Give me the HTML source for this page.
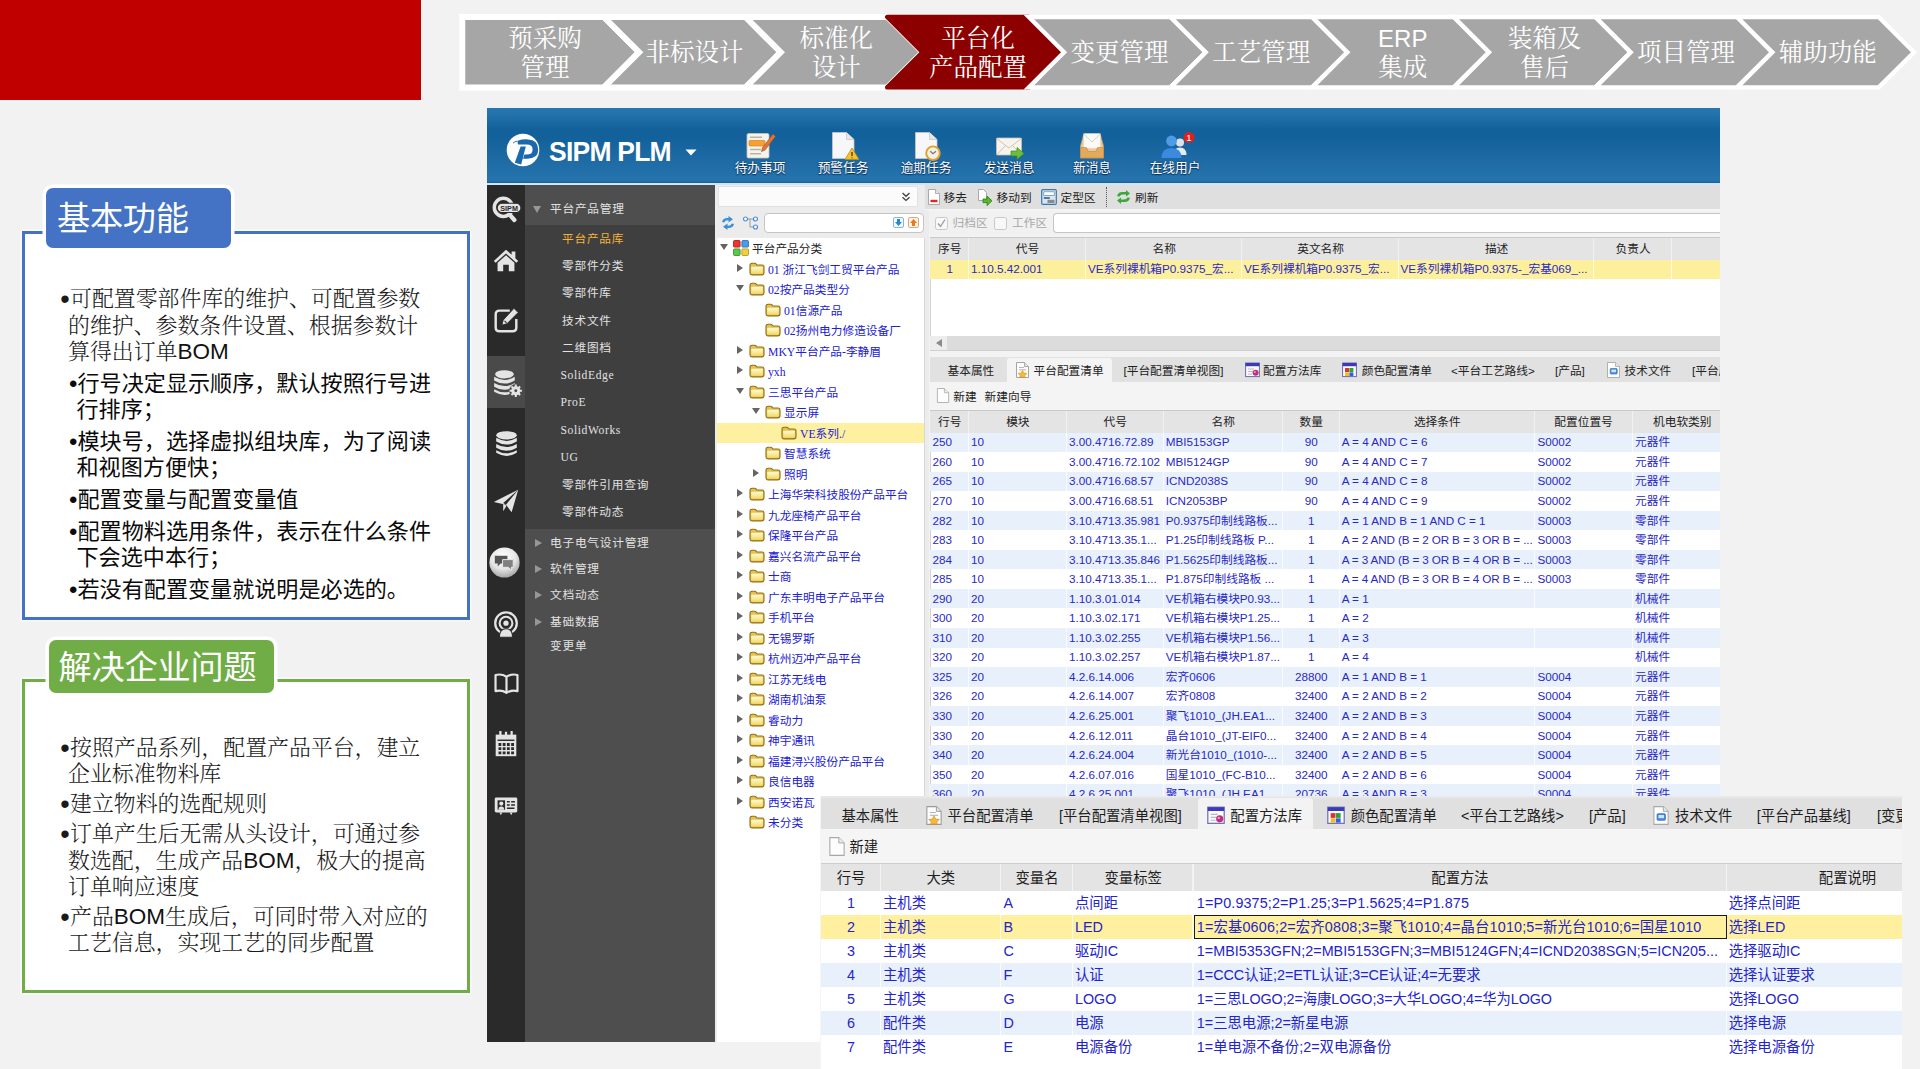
<!DOCTYPE html>
<html lang="zh-CN"><head><meta charset="utf-8"><title>平台化产品配置</title>
<style>

*{margin:0;padding:0;box-sizing:border-box}
html,body{width:1920px;height:1069px;overflow:hidden;background:#f2f2f2}
body{position:relative;font-family:"Liberation Sans","Noto Sans CJK SC",sans-serif}
.abs{position:absolute}
.red{position:absolute;left:0;top:0;width:421px;height:100px;background:#c00000}
.chev{position:absolute;left:0;top:0}
.cvt{position:absolute;width:200px;text-align:center;color:#fff;font-family:"Liberation Serif","Noto Serif CJK SC",serif;font-size:24.5px;line-height:28.5px;white-space:nowrap;font-weight:400}
.cvt .erp{font-family:"Liberation Sans",sans-serif;font-size:24px}
.box{position:absolute;background:#fff;border:3.7px solid #000;box-shadow:0 0 2px 1px rgba(255,255,255,.9)}
.tab{position:absolute;border-radius:7px;box-shadow:0 0 0 3.5px #fff}
.tab span{position:absolute;top:0;height:100%;display:flex;align-items:center;color:#fff;font-size:33.2px;white-space:nowrap;font-family:"Liberation Sans","Noto Sans CJK SC",sans-serif;letter-spacing:-0.2px;padding-bottom:5px}
.ps,.ph{position:absolute;white-space:nowrap;color:#111;font-size:21.9px;line-height:26.2px}
.ps{font-family:"Liberation Serif","Noto Serif CJK SC",serif;font-weight:300;color:#1a1a1a}
.ps b{font-family:"Liberation Sans",sans-serif;font-weight:400;font-size:22.5px;color:#111}
.ph{font-family:"Liberation Sans","Noto Sans CJK SC",sans-serif;line-height:26.4px;font-size:22.1px;font-weight:400;color:#0a0a0a}
.ps u,.ph u{display:inline-block;width:2px;text-decoration:none}
.ph u{width:1px}
.bu{position:absolute;font-family:"Liberation Sans",sans-serif;font-size:27px;left:-7.8px;top:0;line-height:26.6px}
.ph .bu{font-size:24px;left:-7.4px;line-height:26.4px}


.hdr{position:absolute;left:487px;top:108px;width:1233px;height:75px;background:linear-gradient(#2776b0 0%,#2473ac 8%,#13619b 28%,#13619b 40%,#1c69a3 65%,#2674ad 97%,#205d90 100%)}
.hdrline{position:absolute;left:487px;top:183px;width:1233px;height:1.5px;background:#cfe6f7}
.logo{position:absolute;left:549px;top:135.6px;color:#fff;font:700 28px/32px "Liberation Sans",sans-serif;letter-spacing:-0.8px;white-space:nowrap;transform-origin:0 50%;transform:scaleX(.945)}
.hlab{position:absolute;top:159.8px;width:80px;text-align:center;color:#fff;font-size:12.7px;line-height:16px;white-space:nowrap;text-shadow:0 1px 1px rgba(0,30,70,.8),0 0 2px rgba(0,30,70,.6)}
.ibar{position:absolute;left:487px;top:184.5px;width:38px;height:857.5px;background:#2a2a2a}
.isel{position:absolute;left:487px;top:356px;width:38px;height:52px;background:#4a4a4a}
.nav{position:absolute;left:525px;top:184.5px;width:189.5px;height:857.5px;background:#4e4e4e}
.navsub{position:absolute;left:525px;top:225px;width:189.5px;height:303.5px;background:#3f3f3f}
.ng,.ns{position:absolute;color:#e2e2e2;font-size:11.7px;line-height:18px;letter-spacing:.75px;white-space:nowrap}
.ng{left:550px}
.ns{left:562px}
.ns.on{color:#f3b43a}
.ns.en{font-family:"Liberation Serif",serif;font-size:11.6px;left:560.5px;letter-spacing:.6px}
.ng i{position:absolute;width:0;height:0}
.ng i.dn{left:-17px;top:6px;border-left:4.5px solid transparent;border-right:4.5px solid transparent;border-top:7px solid #979797}
.ng i.rt{left:-15px;top:4.5px;border-top:4.5px solid transparent;border-bottom:4.5px solid transparent;border-left:7px solid #979797}
.tpanel{position:absolute;left:714.5px;top:184.5px;width:214px;height:857.5px;background:#ececec}
.combo{position:absolute;left:718px;top:186px;width:200px;height:21px;background:#fbfbfb;border:1px solid #e2e2e2;border-radius:2px}
.tsearch{position:absolute;left:764px;top:212.5px;width:160px;height:20.5px;background:#fff;border:1px solid #c4c4c4;border-radius:4px}
.twhite{position:absolute;left:717px;top:237.5px;width:207.5px;height:804.5px;background:#fff;border-right:1px solid #d8d8d8}
.tsel{position:absolute;left:717px;width:207px;height:20px;background:#fdf0a0}
.tt{position:absolute;color:#2020d2;font-family:"Liberation Serif","Noto Sans CJK SC",sans-serif;font-size:11.7px;line-height:18px;white-space:nowrap;letter-spacing:0}
.tt.blk{color:#222;font-family:"Liberation Sans","Noto Sans CJK SC",sans-serif}
.ta{position:absolute;width:0;height:0}
.ta.d{border-left:4px solid transparent;border-right:4px solid transparent;border-top:6.5px solid #646464}
.ta.r{border-top:4px solid transparent;border-bottom:4px solid transparent;border-left:6.5px solid #646464}


.rbg{position:absolute;left:928.5px;top:184.5px;width:791.5px;height:857.5px;background:#f3f3f3}
.tb1{position:absolute;left:925px;top:184.5px;width:795px;height:25px;background:#dfdfdf;border-bottom:1px solid #f6f6f6}
.tx{position:absolute;color:#222;font-size:11.7px;line-height:18px;white-space:nowrap}
.tx.gy{color:#a8a8a8}
.frow{position:absolute;left:928.5px;top:211px;width:791.5px;height:24px;background:#f1f1f1}
.cb{position:absolute;width:13px;height:13px;border:1px solid #c8c8c8;border-radius:2.5px;background:#f8f8f8}
.finput{position:absolute;left:1053px;top:213px;width:667px;height:20px;background:#fff;border:1px solid #c6c6c6;border-right:0;border-radius:4px 0 0 4px}
.g1white{position:absolute;left:930.3px;top:237.8px;width:789.7px;height:98px;background:#fff;border-left:1px solid #d4d4d4}
.ghead{position:absolute;background:#e4e4e4}
.gline{position:absolute;background:#c9c9c9}
.gh{position:absolute;height:22px;line-height:22px;text-align:center;color:#222;font-size:11.7px;white-space:nowrap}
.gsep{position:absolute;width:1px;background:#f1f1f1}
.gsep.w{background:rgba(255,255,255,.75)}
.gsel{position:absolute;background:#fdf09c}
.gc{position:absolute;color:#2828c6;font-size:11.7px;line-height:18px;white-space:nowrap}
.gc.ctr{text-align:center}
.hsb{position:absolute;left:930.3px;top:335.8px;width:789.7px;height:14.5px;background:#dcdcdc}
.hsbb{position:absolute;left:930.3px;top:335.8px;width:17px;height:14.5px;background:#ededed}
.hsbl{position:absolute;left:930.3px;top:350.3px;width:789.7px;height:1px;background:#cfcfcf}
.ta.l{border-top:4px solid transparent;border-bottom:4px solid transparent;border-right:6px solid #8a8a8a}
.tabs1{position:absolute;left:930.3px;top:357.3px;width:789.7px;height:24.5px;background:#e1e1e1}
.tabon{position:absolute;background:#f4f4f4;border-radius:3px 3px 0 0}
.tb2{position:absolute;left:930.3px;top:381.8px;width:789.7px;height:28px;background:#f4f4f4}
.g2white{position:absolute;left:930.3px;top:432.5px;width:789.7px;height:372px;background:#fff;border-left:1px solid #d4d4d4}
.gzeb{position:absolute;background:#e8f0fb}
.ov{position:absolute;left:821.3px;top:796px;width:1080.7px;height:273px;background:#fff;overflow:hidden;box-shadow:-1px 0 0 #f5f5f5}
.otabs{position:absolute;left:0;top:0;width:100%;height:33px;background:linear-gradient(#ececec 0,#e0e0e0 3px)}
.otabon{position:absolute;background:#f3f3f3;border-radius:4px 4px 0 0}
.ox{position:absolute;color:#1e1e1e;font-size:14.35px;line-height:20px;white-space:nowrap}
.otb{position:absolute;left:0;top:33px;width:100%;height:34.2px;background:#f5f5f5}
.ogl{position:absolute;left:0;width:100%;height:1px;background:#cdcdcd}
.oghead{position:absolute;left:0;width:100%;height:26.8px;background:#e4e4e4}
.ogh{position:absolute;height:26.8px;line-height:29.6px;text-align:center;color:#1e1e1e;font-size:14.35px;white-space:nowrap}
.ogsep{position:absolute;width:1.2px;background:#f3f3f3}
.ogsep.w{background:rgba(255,255,255,.75)}
.ogsel{position:absolute;left:0;width:100%;background:#fef09e}
.ogzeb{position:absolute;left:0;width:100%;background:#e8f0fb}
.ofocus{position:absolute;border:1.6px solid #1a1a1a}
.oc{position:absolute;color:#2424cc;font-size:14.35px;line-height:20px;white-space:nowrap}
.oc.ctr{text-align:center}

</style></head><body>
<div class="red"></div>
<svg class="chev" width="1920" height="104" viewBox="0 0 1920 104">
<polygon points="462.25,17.00 603.90,17.00 639.10,52.20 603.90,87.40 462.25,87.40" fill="#a6a6a6" stroke="#ffffff" stroke-width="6" stroke-linejoin="miter"/>
<polygon points="603.90,17.00 745.55,17.00 780.75,52.20 745.55,87.40 603.90,87.40 639.10,52.20" fill="#a6a6a6" stroke="#ffffff" stroke-width="6" stroke-linejoin="miter"/>
<polygon points="745.55,17.00 887.20,17.00 922.40,52.20 887.20,87.40 745.55,87.40 780.75,52.20" fill="#a6a6a6" stroke="#ffffff" stroke-width="6" stroke-linejoin="miter"/>
<polygon points="887.20,17.00 1028.85,17.00 1064.05,52.20 1028.85,87.40 887.20,87.40 922.40,52.20" fill="#8c0000" stroke="#8c0000" stroke-width="4.4" stroke-linejoin="round"/>
<polygon points="1028.85,17.00 1170.50,17.00 1205.70,52.20 1170.50,87.40 1028.85,87.40 1064.05,52.20" fill="#a6a6a6" stroke="#ffffff" stroke-width="4.4" stroke-linejoin="miter"/>
<polygon points="1170.50,17.00 1312.15,17.00 1347.35,52.20 1312.15,87.40 1170.50,87.40 1205.70,52.20" fill="#a6a6a6" stroke="#ffffff" stroke-width="4.4" stroke-linejoin="miter"/>
<polygon points="1312.15,17.00 1453.80,17.00 1489.00,52.20 1453.80,87.40 1312.15,87.40 1347.35,52.20" fill="#a6a6a6" stroke="#ffffff" stroke-width="4.4" stroke-linejoin="miter"/>
<polygon points="1453.80,17.00 1595.45,17.00 1630.65,52.20 1595.45,87.40 1453.80,87.40 1489.00,52.20" fill="#a6a6a6" stroke="#ffffff" stroke-width="4.4" stroke-linejoin="miter"/>
<polygon points="1595.45,17.00 1737.10,17.00 1772.30,52.20 1737.10,87.40 1595.45,87.40 1630.65,52.20" fill="#a6a6a6" stroke="#ffffff" stroke-width="4.4" stroke-linejoin="miter"/>
<polygon points="1737.10,17.00 1878.75,17.00 1913.95,52.20 1878.75,87.40 1737.10,87.40 1772.30,52.20" fill="#a6a6a6" stroke="#ffffff" stroke-width="4.4" stroke-linejoin="miter"/>
</svg>
<div class="cvt" style="left:445.0px;top:25.1px">预采购<br>管理</div>
<div class="cvt" style="left:594.6px;top:39.1px">非标设计</div>
<div class="cvt" style="left:736.2px;top:25.1px">标准化<br>设计</div>
<div class="cvt" style="left:877.9px;top:25.1px">平台化<br>产品配置</div>
<div class="cvt" style="left:1019.5px;top:39.1px">变更管理</div>
<div class="cvt" style="left:1161.2px;top:39.1px">工艺管理</div>
<div class="cvt" style="left:1302.8px;top:25.1px"><span class="erp">ERP</span><br>集成</div>
<div class="cvt" style="left:1444.5px;top:25.1px">装箱及<br>售后</div>
<div class="cvt" style="left:1586.1px;top:39.1px">项目管理</div>
<div class="cvt" style="left:1727.8px;top:39.1px">辅助功能</div>
<div class="box" style="left:22.3px;top:230.6px;width:447.5px;height:389px;border-color:#4472c4"></div>
<div class="tab" style="left:46.4px;top:187.6px;width:184.2px;height:60px;background:#4472c4"><span style="left:10.5px">基本功能</span></div>
<div class="box" style="left:22px;top:679.2px;width:447.5px;height:313.8px;border-color:#70ad47"></div>
<div class="tab" style="left:49px;top:640.2px;width:225px;height:53.3px;background:#70ad47"><span style="left:9.5px">解决企业问题</span></div>
<div class="ps" style="left:68px;top:286.4px"><span class="bu">•</span><u></u>可配置零部件库的维护、可配置参数<br>的维护、参数条件设置、根据参数计<br>算得出订单<b>BOM</b></div>
<div class="ph" style="left:76.5px;top:371px"><span class="bu">•</span><u></u>行号决定显示顺序，默认按照行号进<br>行排序；</div>
<div class="ph" style="left:76.5px;top:428.5px"><span class="bu">•</span><u></u>模块号，选择虚拟组块库，为了阅读<br>和视图方便快；</div>
<div class="ph" style="left:76.5px;top:487px"><span class="bu">•</span><u></u>配置变量与配置变量值</div>
<div class="ph" style="left:76.5px;top:519px"><span class="bu">•</span><u></u>配置物料选用条件，表示在什么条件<br>下会选中本行；</div>
<div class="ph" style="left:76.5px;top:576.5px"><span class="bu">•</span><u></u>若没有配置变量就说明是必选的。</div>
<div class="ps" style="left:68px;top:734.5px"><span class="bu">•</span><u></u>按照产品系列，配置产品平台，建立<br>企业标准物料库</div>
<div class="ps" style="left:68px;top:790.6px"><span class="bu">•</span><u></u>建立物料的选配规则</div>
<div class="ps" style="left:68px;top:821.4px"><span class="bu">•</span><u></u>订单产生后无需从头设计，可通过参<br>数选配，生成产品<b>BOM</b>，极大的提高<br>订单响应速度</div>
<div class="ps" style="left:68px;top:904px"><span class="bu">•</span><u></u>产品<b>BOM</b>生成后，可同时带入对应的<br>工艺信息，实现工艺的同步配置</div>
<div class="hdr"></div><div class="hdrline"></div>
<svg class="abs" style="left:504.5px;top:132px" width="36" height="36" viewBox="0 0 36 36"><circle cx="18" cy="18" r="16.3" fill="#fff"/><path d="M12.4 9.6 L13.4 8.4 Q17 7.2 23 7.4 Q33.2 8 33.2 17.6 Q33.2 26.8 22.5 26.8 L18 26.8 L19.4 22.6 L21.5 22.6 Q27.6 22.6 27.6 17.4 Q27.6 12.4 21.8 12.4 L13 12.4 Z" fill="#1c68ad"/><path d="M15.6 14.6 L20.8 14.6 L16.2 32.4 L9.8 30.8 Z" fill="#1c68ad"/><path d="M8 11.2 Q10 9.2 12.4 9" stroke="#1c68ad" stroke-width=".9" fill="none"/></svg>
<div class="logo">SIPM PLM</div>
<svg class="abs" style="left:684.5px;top:149px" width="12" height="7" viewBox="0 0 12 7"><path d="M0.5 0.5 L11.5 0.5 L6 6.5 Z" fill="#fff"/></svg>
<svg class="abs" style="left:744px;top:130px;overflow:visible" width="32" height="32" viewBox="0 0 32 32"><rect x="3" y="3.5" width="22" height="24.5" rx="1.5" fill="#f6f3ec" stroke="#c9c2b4" stroke-width=".8"/><rect x="5" y="10.5" width="16" height="5.5" rx="1" fill="#f5a030" stroke="#d07a10" stroke-width=".6"/><path d="M6 7.2h12M6 19.5h11M6 23.8h11" stroke="#b9b3a6" stroke-width="1.4"/><path d="M29 4 L31.5 6.5 L21 20 L17.5 21.5 L18.6 17.6 Z" fill="#e0753a" stroke="#9c4a1c" stroke-width=".6"/></svg>
<div class="hlab" style="left:720px">待办事项</div>
<svg class="abs" style="left:827px;top:130px;overflow:visible" width="32" height="32" viewBox="0 0 32 32"><path d="M5.5 2.5 H19.5 L27 9.5 V28.5 H5.5 Z" fill="#f7f7f9" stroke="#c8c8c8" stroke-width=".8"/><path d="M19.5 2.5 V9.5 H27" fill="#e6e6e6" stroke="#c8c8c8" stroke-width=".8"/><path d="M25 18 L32 29.4 H18 Z" fill="#f5c330" stroke="#b98a10" stroke-width=".8"/><path d="M25 22 V26 M25 27.4 V28.2" stroke="#5a4300" stroke-width="1.4"/></svg>
<div class="hlab" style="left:803px">预警任务</div>
<svg class="abs" style="left:910px;top:130px;overflow:visible" width="32" height="32" viewBox="0 0 32 32"><path d="M5.5 2.5 H19.5 L27 9.5 V28.5 H5.5 Z" fill="#f7f7f9" stroke="#c8c8c8" stroke-width=".8"/><path d="M19.5 2.5 V9.5 H27" fill="#e6e6e6" stroke="#c8c8c8" stroke-width=".8"/><circle cx="23" cy="23.2" r="6.8" fill="#f4efe4" stroke="#e2a02a" stroke-width="1.9"/><path d="M20.3 21.2 L23 23.8 L26 21.2" stroke="#777" stroke-width="1.2" fill="none"/></svg>
<div class="hlab" style="left:886px">逾期任务</div>
<svg class="abs" style="left:993px;top:130px;overflow:visible" width="32" height="32" viewBox="0 0 32 32"><rect x="3.5" y="8" width="25" height="17" rx="1" fill="#f7f4ee" stroke="#c9c0b0" stroke-width=".8"/><path d="M3.5 8.5 L16 18 L28.5 8.5 M3.5 25 L12.5 15.5 M28.5 25 L19.5 15.5" stroke="#c9c0b0" stroke-width=".9" fill="none"/><path d="M18 21 H24 V17.5 L31 23.5 L24 29.5 V26 H18 Z" fill="#6cbf3c" stroke="#3e8a1c" stroke-width=".7"/></svg>
<div class="hlab" style="left:969px">发送消息</div>
<svg class="abs" style="left:1076px;top:130px;overflow:visible" width="32" height="32" viewBox="0 0 32 32"><path d="M4.5 16 L7.5 5 H24.5 L27.5 16 V28 H4.5 Z" fill="#efc98f" stroke="#c99a56" stroke-width=".7"/><rect x="7.5" y="3.5" width="17" height="15" rx="1" fill="#fbfaf6" stroke="#d8d2c6" stroke-width=".6"/><path d="M7.8 4.2 L16 12 L24.2 4.2" stroke="#d3ccbc" stroke-width=".9" fill="none"/><path d="M4.5 17.5 H10.5 L12 21.5 H20 L21.5 17.5 H27.5 V28 H4.5 Z" fill="#e3a95c" stroke="#c08a40" stroke-width=".6"/></svg>
<div class="hlab" style="left:1052px">新消息</div>
<svg class="abs" style="left:1159px;top:130px;overflow:visible" width="32" height="32" viewBox="0 0 32 32"><circle cx="21" cy="12.5" r="4" fill="#dfe3e8"/><path d="M14.5 25 Q14.5 17.5 21 17.5 Q27.5 17.5 27.5 25 Z" fill="#e8eaee"/><circle cx="12.5" cy="11" r="5.4" fill="#4e9be6"/><path d="M2.5 28 Q2.5 18 12.5 18 Q22.5 18 22.5 28 Z" fill="#3b8ae0"/><circle cx="30" cy="7.4" r="5.5" fill="#e02020"/></svg>
<div class="hlab" style="left:1135px">在线用户</div>
<div class="abs" style="left:1184.5px;top:131.8px;width:9px;font:9.5px/11px 'Liberation Sans',sans-serif;color:#fff;text-align:center">1</div>
<div class="ibar"></div><div class="isel"></div>
<svg class="abs" style="left:489.5px;top:194.2px" width="33" height="33" viewBox="0 0 32 32"><circle cx="13" cy="13" r="8.8" fill="none" stroke="#e4e4e4" stroke-width="3.4"/><path d="M19 20 L23.6 25.2" stroke="#e4e4e4" stroke-width="4.2" stroke-linecap="round"/><rect x="7" y="9" width="23" height="9" rx="4.5" fill="#e4e4e4" stroke="#2a2a2a" stroke-width="1"/><text x="18.5" y="16.3" font-size="7" font-weight="700" fill="#2a2a2a" text-anchor="middle" font-family="Liberation Sans,sans-serif">SIPM</text></svg>
<svg class="abs" style="left:491.0px;top:245.0px" width="30" height="30" viewBox="0 0 32 32"><path d="M3 17 L16 5 L22 10.5 V7 H26 V14 L29 17 L27 19 L16 9 L5 19 Z" fill="#e4e4e4"/><path d="M7 19 L16 11 L25 19 V28 H19 V21 H13 V28 H7 Z" fill="#e4e4e4"/></svg>
<svg class="abs" style="left:491.0px;top:305.0px" width="30" height="30" viewBox="0 0 32 32"><path d="M20 6 H9 Q5 6 5 10 V24 Q5 28 9 28 H23 Q27 28 27 24 V15" fill="none" stroke="#e4e4e4" stroke-width="2.6"/><path d="M24.5 3.5 L29 8 L17 20 L11.5 21.5 L13 16 Z" fill="#e4e4e4" stroke="#2a2a2a" stroke-width="1"/><path d="M14.5 17 L16.5 19" stroke="#2a2a2a" stroke-width="1.2"/></svg>
<svg class="abs" style="left:489.5px;top:365.5px" width="33" height="33" viewBox="0 0 32 32"><ellipse cx="14" cy="8" rx="9" ry="4" fill="#e4e4e4"/><path d="M4 10.5 Q14 16.5 24 10.5 V14 Q14 20 4 14 Z M4 16.5 Q14 22.5 24 16.5 V20 Q14 26 4 20 Z M4 22.5 Q14 28.5 24 22.5 V25 Q14 31 4 25 Z" fill="#e4e4e4"/><circle cx="25" cy="24" r="6.5" fill="#4a4a4a"/><circle cx="25" cy="24" r="3.2" fill="none" stroke="#e4e4e4" stroke-width="2.4"/><path d="M25 18 V30 M19 24 H31 M20.8 19.8 L29.2 28.2 M29.2 19.8 L20.8 28.2" stroke="#e4e4e4" stroke-width="2"/><circle cx="25" cy="24" r="1.4" fill="#4a4a4a"/></svg>
<svg class="abs" style="left:489.5px;top:426.5px" width="33" height="33" viewBox="0 0 32 32"><g transform="translate(2,0)"><ellipse cx="14" cy="8" rx="10" ry="4" fill="#e4e4e4"/><path d="M4 10.5 Q14 16.5 24 10.5 V14 Q14 20 4 14 Z M4 16.5 Q14 22.5 24 16.5 V20 Q14 26 4 20 Z M4 22.5 Q14 28.5 24 22.5 V25 Q14 31 4 25 Z" fill="#e4e4e4"/></g></svg>
<svg class="abs" style="left:491.0px;top:486.0px" width="30" height="30" viewBox="0 0 32 32"><path d="M3 17 L29 4 L22 28 L16 20 Z" fill="#e4e4e4"/><path d="M16 20 L29 4 L13 18 Z" fill="#2a2a2a"/><path d="M13 19 L16.5 21 L13 27 Z" fill="#e4e4e4"/></svg>
<svg class="abs" style="left:489.3px;top:547.0px" width="31" height="31" viewBox="0 0 32 32"><circle cx="16" cy="16" r="15.6" fill="url(#sg)"/><path d="M6 9 H19 V17 H12 L9 20 V17 H6 Z" fill="#555"/><path d="M14 13 H25 V21 H23 V24 L20 21 H14 Z" fill="#808080" stroke="#e8e8e8" stroke-width="1"/></svg>
<svg class="abs" style="left:491.0px;top:610.0px" width="30" height="30" viewBox="0 0 32 32"><circle cx="16" cy="14" r="11.5" fill="none" stroke="#e4e4e4" stroke-width="2.4"/><circle cx="16" cy="14" r="6.8" fill="none" stroke="#e4e4e4" stroke-width="2.2"/><circle cx="16" cy="14" r="2.8" fill="#e4e4e4"/><path d="M9 29 Q9 20 16 20 Q23 20 23 29 Z" fill="#e4e4e4" stroke="#2a2a2a" stroke-width="1.2"/></svg>
<svg class="abs" style="left:492.5px;top:669.5px" width="27" height="27" viewBox="0 0 32 32"><path d="M16 8 Q10 4 3 6 V25 Q10 23 16 27 Q22 23 29 25 V6 Q22 4 16 8 Z M16 8 V27" fill="none" stroke="#e4e4e4" stroke-width="2.6" stroke-linejoin="round"/></svg>
<svg class="abs" style="left:491.0px;top:729.0px" width="30" height="30" viewBox="0 0 32 32"><rect x="5" y="6" width="22" height="23" fill="#e4e4e4"/><path d="M10 2 V9 M22 2 V9 M16 3 V8" stroke="#e4e4e4" stroke-width="2.4"/><path d="M7 12 H25" stroke="#2a2a2a" stroke-width="1.5"/><path d="M8 15h3v3h-3zM12.5 15h3v3h-3zM17 15h3v3h-3zM21.5 15h3v3h-3zM8 19.5h3v3h-3zM12.5 19.5h3v3h-3zM17 19.5h3v3h-3zM21.5 19.5h3v3h-3zM8 24h3v3h-3zM12.5 24h3v3h-3zM17 24h3v3h-3zM21.5 24h3v3h-3z" fill="#2a2a2a"/></svg>
<svg class="abs" style="left:491.0px;top:790.0px" width="30" height="30" viewBox="0 0 32 32"><rect x="4" y="8" width="24" height="16" rx="1.5" fill="#e4e4e4"/><rect x="7" y="11" width="8" height="10" fill="#2a2a2a"/><circle cx="11" cy="14.5" r="2.2" fill="#e4e4e4"/><path d="M8 21 Q8 17.5 11 17.5 Q14 17.5 14 21 Z" fill="#e4e4e4"/><path d="M17 12.5h3M21.5 12.5h4M17 16h3M21.5 16h4M17 19.5h8" stroke="#2a2a2a" stroke-width="1.6"/><path d="M9 24 L10.5 27 L12 24 M20 24 L21.5 27 L23 24" fill="#e4e4e4"/></svg>
<div class="nav"></div><div class="navsub"></div>
<div class="ng" style="top:200.3px"><i class="dn"></i>平台产品管理</div>
<div class="ns on" style="top:230.2px">平台产品库</div>
<div class="ns" style="top:257.2px">零部件分类</div>
<div class="ns" style="top:284.2px">零部件库</div>
<div class="ns" style="top:312.2px">技术文件</div>
<div class="ns" style="top:339.2px">二维图档</div>
<div class="ns en" style="top:367.2px">SolidEdge</div>
<div class="ns en" style="top:394.2px">ProE</div>
<div class="ns en" style="top:422.2px">SolidWorks</div>
<div class="ns en" style="top:449.2px">UG</div>
<div class="ns" style="top:476.2px">零部件引用查询</div>
<div class="ns" style="top:503.2px">零部件动态</div>
<div class="ng" style="top:534.2px"><i class="rt"></i>电子电气设计管理</div>
<div class="ng" style="top:560.2px"><i class="rt"></i>软件管理</div>
<div class="ng" style="top:586.2px"><i class="rt"></i>文档动态</div>
<div class="ng" style="top:613.2px"><i class="rt"></i>基础数据</div>
<div class="ng" style="top:637.2px">变更单</div>
<div class="tpanel"></div>
<svg width="0" height="0" style="position:absolute"><defs><linearGradient id="fg" x1="0" y1="0" x2="0" y2="1"><stop offset="0" stop-color="#fffbd0"/><stop offset="1" stop-color="#f3d968"/></linearGradient><radialGradient id="sg" cx=".45" cy=".3" r=".75"><stop offset="0" stop-color="#ffffff"/><stop offset=".55" stop-color="#e6e6e6"/><stop offset="1" stop-color="#9c9c9c"/></radialGradient></defs></svg>
<div class="combo"></div>
<svg class="abs" style="left:901px;top:192px" width="10" height="10" viewBox="0 0 10 10"><path d="M1.5 1 L5 4.2 L8.5 1 M1.5 5.2 L5 8.4 L8.5 5.2" fill="none" stroke="#444" stroke-width="1.4"/></svg>
<svg class="abs" style="left:719px;top:214px" width="18" height="18" viewBox="0 0 18 18"><path d="M3 8 Q4 3.5 9.5 4 L9.5 2 L14 5.2 L9.5 8.4 V6.3 Q6 6 5.2 8.6 Z" fill="#3b8fd9"/><path d="M15 10 Q14 14.5 8.5 14 L8.5 16 L4 12.8 L8.5 9.6 V11.7 Q12 12 12.8 9.4 Z" fill="#3b8fd9"/></svg>
<svg class="abs" style="left:742px;top:215px" width="18" height="16" viewBox="0 0 18 16"><path d="M5 4 H12 M8 4 V12 H12" stroke="#999" stroke-width="1" fill="none"/><circle cx="3.5" cy="4" r="2" fill="#fff" stroke="#4a8fd6" stroke-width="1.2"/><circle cx="13.5" cy="4" r="2" fill="#fff" stroke="#4a8fd6" stroke-width="1.2"/><circle cx="13.5" cy="12" r="2" fill="#fff" stroke="#4a8fd6" stroke-width="1.2"/></svg>
<div class="tsearch"></div>
<svg class="abs" style="left:893px;top:217px" width="11" height="11" viewBox="0 0 11 11"><rect x=".5" y=".5" width="10" height="10" rx="1.5" fill="#f4f9fd" stroke="#8cb4d8"/><path d="M4 2 H7 V5 H9 L5.5 9 L2 5 H4 Z" fill="#2486d8"/></svg>
<svg class="abs" style="left:908px;top:217px" width="11" height="11" viewBox="0 0 11 11"><rect x=".5" y=".5" width="10" height="10" rx="1.5" fill="#fff6ee" stroke="#e0a878"/><path d="M4 9 H7 V6 H9 L5.5 2 L2 6 H4 Z" fill="#f07818"/></svg>
<div class="twhite"></div>
<i class="ta d" style="left:720px;top:244px"></i>
<svg class="abs" style="left:733px;top:240px" width="16" height="16" viewBox="0 0 16 16"><rect x=".5" y=".5" width="6.6" height="6.6" rx="1" fill="#e33" stroke="#a11" stroke-width=".8"/><rect x="8.9" y=".5" width="6.6" height="6.6" rx="1" fill="#4a9be8" stroke="#2468b0" stroke-width=".8"/><rect x=".5" y="8.9" width="6.6" height="6.6" rx="1" fill="#5cc84a" stroke="#2e8a20" stroke-width=".8"/><rect x="8.9" y="8.9" width="6.6" height="6.6" rx="1" fill="#f0d040" stroke="#b09010" stroke-width=".8"/></svg>
<div class="tt blk" style="left:752px;top:240.0px">平台产品分类</div>
<i class="ta r" style="left:737px;top:264px"></i>
<svg class="abs" style="left:748.5px;top:261.6px" width="16" height="14" viewBox="0 0 16 14"><path d="M1 3.4 Q1 1.3 3 1.3 L5.6 1.3 Q6.6 1.3 7.2 2.1 L7.9 3 L13 3 Q15 3 15 5 L15 10.6 Q15 12.9 12.8 12.9 L3.2 12.9 Q1 12.9 1 10.6 Z" fill="#e6c050" stroke="#8f7018" stroke-width="1.1"/><path d="M2.2 5.6 Q2.2 4.8 3 4.8 L13 4.8 Q13.8 4.8 13.8 5.6 L13.8 10.4 Q13.8 11.7 12.5 11.7 L3.5 11.7 Q2.2 11.7 2.2 10.4 Z" fill="url(#fg)"/></svg>
<div class="tt" style="left:768.0px;top:262.0px">01 浙江飞剑工贸平台产品</div>
<i class="ta d" style="left:736px;top:285px"></i>
<svg class="abs" style="left:748.5px;top:281.6px" width="16" height="14" viewBox="0 0 16 14"><path d="M1 3.4 Q1 1.3 3 1.3 L5.6 1.3 Q6.6 1.3 7.2 2.1 L7.9 3 L13 3 Q15 3 15 5 L15 10.6 Q15 12.9 12.8 12.9 L3.2 12.9 Q1 12.9 1 10.6 Z" fill="#e6c050" stroke="#8f7018" stroke-width="1.1"/><path d="M2.2 5.6 Q2.2 4.8 3 4.8 L13 4.8 Q13.8 4.8 13.8 5.6 L13.8 10.4 Q13.8 11.7 12.5 11.7 L3.5 11.7 Q2.2 11.7 2.2 10.4 Z" fill="url(#fg)"/></svg>
<div class="tt" style="left:768.0px;top:282.0px">02按产品类型分</div>
<svg class="abs" style="left:764.5px;top:302.6px" width="16" height="14" viewBox="0 0 16 14"><path d="M1 3.4 Q1 1.3 3 1.3 L5.6 1.3 Q6.6 1.3 7.2 2.1 L7.9 3 L13 3 Q15 3 15 5 L15 10.6 Q15 12.9 12.8 12.9 L3.2 12.9 Q1 12.9 1 10.6 Z" fill="#e6c050" stroke="#8f7018" stroke-width="1.1"/><path d="M2.2 5.6 Q2.2 4.8 3 4.8 L13 4.8 Q13.8 4.8 13.8 5.6 L13.8 10.4 Q13.8 11.7 12.5 11.7 L3.5 11.7 Q2.2 11.7 2.2 10.4 Z" fill="url(#fg)"/></svg>
<div class="tt" style="left:784.0px;top:303.0px">01信源产品</div>
<svg class="abs" style="left:764.5px;top:322.6px" width="16" height="14" viewBox="0 0 16 14"><path d="M1 3.4 Q1 1.3 3 1.3 L5.6 1.3 Q6.6 1.3 7.2 2.1 L7.9 3 L13 3 Q15 3 15 5 L15 10.6 Q15 12.9 12.8 12.9 L3.2 12.9 Q1 12.9 1 10.6 Z" fill="#e6c050" stroke="#8f7018" stroke-width="1.1"/><path d="M2.2 5.6 Q2.2 4.8 3 4.8 L13 4.8 Q13.8 4.8 13.8 5.6 L13.8 10.4 Q13.8 11.7 12.5 11.7 L3.5 11.7 Q2.2 11.7 2.2 10.4 Z" fill="url(#fg)"/></svg>
<div class="tt" style="left:784.0px;top:323.0px">02扬州电力修造设备厂</div>
<i class="ta r" style="left:737px;top:346px"></i>
<svg class="abs" style="left:748.5px;top:343.6px" width="16" height="14" viewBox="0 0 16 14"><path d="M1 3.4 Q1 1.3 3 1.3 L5.6 1.3 Q6.6 1.3 7.2 2.1 L7.9 3 L13 3 Q15 3 15 5 L15 10.6 Q15 12.9 12.8 12.9 L3.2 12.9 Q1 12.9 1 10.6 Z" fill="#e6c050" stroke="#8f7018" stroke-width="1.1"/><path d="M2.2 5.6 Q2.2 4.8 3 4.8 L13 4.8 Q13.8 4.8 13.8 5.6 L13.8 10.4 Q13.8 11.7 12.5 11.7 L3.5 11.7 Q2.2 11.7 2.2 10.4 Z" fill="url(#fg)"/></svg>
<div class="tt" style="left:768.0px;top:344.0px">MKY平台产品-李静眉</div>
<i class="ta r" style="left:737px;top:366px"></i>
<svg class="abs" style="left:748.5px;top:363.6px" width="16" height="14" viewBox="0 0 16 14"><path d="M1 3.4 Q1 1.3 3 1.3 L5.6 1.3 Q6.6 1.3 7.2 2.1 L7.9 3 L13 3 Q15 3 15 5 L15 10.6 Q15 12.9 12.8 12.9 L3.2 12.9 Q1 12.9 1 10.6 Z" fill="#e6c050" stroke="#8f7018" stroke-width="1.1"/><path d="M2.2 5.6 Q2.2 4.8 3 4.8 L13 4.8 Q13.8 4.8 13.8 5.6 L13.8 10.4 Q13.8 11.7 12.5 11.7 L3.5 11.7 Q2.2 11.7 2.2 10.4 Z" fill="url(#fg)"/></svg>
<div class="tt" style="left:768.0px;top:364.0px">yxh</div>
<i class="ta d" style="left:736px;top:388px"></i>
<svg class="abs" style="left:748.5px;top:384.6px" width="16" height="14" viewBox="0 0 16 14"><path d="M1 3.4 Q1 1.3 3 1.3 L5.6 1.3 Q6.6 1.3 7.2 2.1 L7.9 3 L13 3 Q15 3 15 5 L15 10.6 Q15 12.9 12.8 12.9 L3.2 12.9 Q1 12.9 1 10.6 Z" fill="#e6c050" stroke="#8f7018" stroke-width="1.1"/><path d="M2.2 5.6 Q2.2 4.8 3 4.8 L13 4.8 Q13.8 4.8 13.8 5.6 L13.8 10.4 Q13.8 11.7 12.5 11.7 L3.5 11.7 Q2.2 11.7 2.2 10.4 Z" fill="url(#fg)"/></svg>
<div class="tt" style="left:768.0px;top:385.0px">三思平台产品</div>
<i class="ta d" style="left:752px;top:408px"></i>
<svg class="abs" style="left:764.5px;top:404.6px" width="16" height="14" viewBox="0 0 16 14"><path d="M1 3.4 Q1 1.3 3 1.3 L5.6 1.3 Q6.6 1.3 7.2 2.1 L7.9 3 L13 3 Q15 3 15 5 L15 10.6 Q15 12.9 12.8 12.9 L3.2 12.9 Q1 12.9 1 10.6 Z" fill="#e6c050" stroke="#8f7018" stroke-width="1.1"/><path d="M2.2 5.6 Q2.2 4.8 3 4.8 L13 4.8 Q13.8 4.8 13.8 5.6 L13.8 10.4 Q13.8 11.7 12.5 11.7 L3.5 11.7 Q2.2 11.7 2.2 10.4 Z" fill="url(#fg)"/></svg>
<div class="tt" style="left:784.0px;top:405.0px">显示屏</div>
<div class="tsel" style="top:423px"></div>
<svg class="abs" style="left:780.5px;top:425.6px" width="16" height="14" viewBox="0 0 16 14"><path d="M1 3.4 Q1 1.3 3 1.3 L5.6 1.3 Q6.6 1.3 7.2 2.1 L7.9 3 L13 3 Q15 3 15 5 L15 10.6 Q15 12.9 12.8 12.9 L3.2 12.9 Q1 12.9 1 10.6 Z" fill="#e6c050" stroke="#8f7018" stroke-width="1.1"/><path d="M2.2 5.6 Q2.2 4.8 3 4.8 L13 4.8 Q13.8 4.8 13.8 5.6 L13.8 10.4 Q13.8 11.7 12.5 11.7 L3.5 11.7 Q2.2 11.7 2.2 10.4 Z" fill="url(#fg)"/></svg>
<div class="tt" style="left:800.0px;top:426.0px">VE系列./</div>
<svg class="abs" style="left:764.5px;top:445.6px" width="16" height="14" viewBox="0 0 16 14"><path d="M1 3.4 Q1 1.3 3 1.3 L5.6 1.3 Q6.6 1.3 7.2 2.1 L7.9 3 L13 3 Q15 3 15 5 L15 10.6 Q15 12.9 12.8 12.9 L3.2 12.9 Q1 12.9 1 10.6 Z" fill="#e6c050" stroke="#8f7018" stroke-width="1.1"/><path d="M2.2 5.6 Q2.2 4.8 3 4.8 L13 4.8 Q13.8 4.8 13.8 5.6 L13.8 10.4 Q13.8 11.7 12.5 11.7 L3.5 11.7 Q2.2 11.7 2.2 10.4 Z" fill="url(#fg)"/></svg>
<div class="tt" style="left:784.0px;top:446.0px">智慧系统</div>
<i class="ta r" style="left:753px;top:469px"></i>
<svg class="abs" style="left:764.5px;top:466.6px" width="16" height="14" viewBox="0 0 16 14"><path d="M1 3.4 Q1 1.3 3 1.3 L5.6 1.3 Q6.6 1.3 7.2 2.1 L7.9 3 L13 3 Q15 3 15 5 L15 10.6 Q15 12.9 12.8 12.9 L3.2 12.9 Q1 12.9 1 10.6 Z" fill="#e6c050" stroke="#8f7018" stroke-width="1.1"/><path d="M2.2 5.6 Q2.2 4.8 3 4.8 L13 4.8 Q13.8 4.8 13.8 5.6 L13.8 10.4 Q13.8 11.7 12.5 11.7 L3.5 11.7 Q2.2 11.7 2.2 10.4 Z" fill="url(#fg)"/></svg>
<div class="tt" style="left:784.0px;top:467.0px">照明</div>
<i class="ta r" style="left:737px;top:489px"></i>
<svg class="abs" style="left:748.5px;top:486.6px" width="16" height="14" viewBox="0 0 16 14"><path d="M1 3.4 Q1 1.3 3 1.3 L5.6 1.3 Q6.6 1.3 7.2 2.1 L7.9 3 L13 3 Q15 3 15 5 L15 10.6 Q15 12.9 12.8 12.9 L3.2 12.9 Q1 12.9 1 10.6 Z" fill="#e6c050" stroke="#8f7018" stroke-width="1.1"/><path d="M2.2 5.6 Q2.2 4.8 3 4.8 L13 4.8 Q13.8 4.8 13.8 5.6 L13.8 10.4 Q13.8 11.7 12.5 11.7 L3.5 11.7 Q2.2 11.7 2.2 10.4 Z" fill="url(#fg)"/></svg>
<div class="tt" style="left:768.0px;top:487.0px">上海华荣科技股份产品平台</div>
<i class="ta r" style="left:737px;top:510px"></i>
<svg class="abs" style="left:748.5px;top:507.6px" width="16" height="14" viewBox="0 0 16 14"><path d="M1 3.4 Q1 1.3 3 1.3 L5.6 1.3 Q6.6 1.3 7.2 2.1 L7.9 3 L13 3 Q15 3 15 5 L15 10.6 Q15 12.9 12.8 12.9 L3.2 12.9 Q1 12.9 1 10.6 Z" fill="#e6c050" stroke="#8f7018" stroke-width="1.1"/><path d="M2.2 5.6 Q2.2 4.8 3 4.8 L13 4.8 Q13.8 4.8 13.8 5.6 L13.8 10.4 Q13.8 11.7 12.5 11.7 L3.5 11.7 Q2.2 11.7 2.2 10.4 Z" fill="url(#fg)"/></svg>
<div class="tt" style="left:768.0px;top:508.0px">九龙座椅产品平台</div>
<i class="ta r" style="left:737px;top:530px"></i>
<svg class="abs" style="left:748.5px;top:527.6px" width="16" height="14" viewBox="0 0 16 14"><path d="M1 3.4 Q1 1.3 3 1.3 L5.6 1.3 Q6.6 1.3 7.2 2.1 L7.9 3 L13 3 Q15 3 15 5 L15 10.6 Q15 12.9 12.8 12.9 L3.2 12.9 Q1 12.9 1 10.6 Z" fill="#e6c050" stroke="#8f7018" stroke-width="1.1"/><path d="M2.2 5.6 Q2.2 4.8 3 4.8 L13 4.8 Q13.8 4.8 13.8 5.6 L13.8 10.4 Q13.8 11.7 12.5 11.7 L3.5 11.7 Q2.2 11.7 2.2 10.4 Z" fill="url(#fg)"/></svg>
<div class="tt" style="left:768.0px;top:528.0px">保隆平台产品</div>
<i class="ta r" style="left:737px;top:551px"></i>
<svg class="abs" style="left:748.5px;top:548.6px" width="16" height="14" viewBox="0 0 16 14"><path d="M1 3.4 Q1 1.3 3 1.3 L5.6 1.3 Q6.6 1.3 7.2 2.1 L7.9 3 L13 3 Q15 3 15 5 L15 10.6 Q15 12.9 12.8 12.9 L3.2 12.9 Q1 12.9 1 10.6 Z" fill="#e6c050" stroke="#8f7018" stroke-width="1.1"/><path d="M2.2 5.6 Q2.2 4.8 3 4.8 L13 4.8 Q13.8 4.8 13.8 5.6 L13.8 10.4 Q13.8 11.7 12.5 11.7 L3.5 11.7 Q2.2 11.7 2.2 10.4 Z" fill="url(#fg)"/></svg>
<div class="tt" style="left:768.0px;top:549.0px">嘉兴名流产品平台</div>
<i class="ta r" style="left:737px;top:571px"></i>
<svg class="abs" style="left:748.5px;top:568.6px" width="16" height="14" viewBox="0 0 16 14"><path d="M1 3.4 Q1 1.3 3 1.3 L5.6 1.3 Q6.6 1.3 7.2 2.1 L7.9 3 L13 3 Q15 3 15 5 L15 10.6 Q15 12.9 12.8 12.9 L3.2 12.9 Q1 12.9 1 10.6 Z" fill="#e6c050" stroke="#8f7018" stroke-width="1.1"/><path d="M2.2 5.6 Q2.2 4.8 3 4.8 L13 4.8 Q13.8 4.8 13.8 5.6 L13.8 10.4 Q13.8 11.7 12.5 11.7 L3.5 11.7 Q2.2 11.7 2.2 10.4 Z" fill="url(#fg)"/></svg>
<div class="tt" style="left:768.0px;top:569.0px">士商</div>
<i class="ta r" style="left:737px;top:592px"></i>
<svg class="abs" style="left:748.5px;top:589.6px" width="16" height="14" viewBox="0 0 16 14"><path d="M1 3.4 Q1 1.3 3 1.3 L5.6 1.3 Q6.6 1.3 7.2 2.1 L7.9 3 L13 3 Q15 3 15 5 L15 10.6 Q15 12.9 12.8 12.9 L3.2 12.9 Q1 12.9 1 10.6 Z" fill="#e6c050" stroke="#8f7018" stroke-width="1.1"/><path d="M2.2 5.6 Q2.2 4.8 3 4.8 L13 4.8 Q13.8 4.8 13.8 5.6 L13.8 10.4 Q13.8 11.7 12.5 11.7 L3.5 11.7 Q2.2 11.7 2.2 10.4 Z" fill="url(#fg)"/></svg>
<div class="tt" style="left:768.0px;top:590.0px">广东丰明电子产品平台</div>
<i class="ta r" style="left:737px;top:612px"></i>
<svg class="abs" style="left:748.5px;top:609.6px" width="16" height="14" viewBox="0 0 16 14"><path d="M1 3.4 Q1 1.3 3 1.3 L5.6 1.3 Q6.6 1.3 7.2 2.1 L7.9 3 L13 3 Q15 3 15 5 L15 10.6 Q15 12.9 12.8 12.9 L3.2 12.9 Q1 12.9 1 10.6 Z" fill="#e6c050" stroke="#8f7018" stroke-width="1.1"/><path d="M2.2 5.6 Q2.2 4.8 3 4.8 L13 4.8 Q13.8 4.8 13.8 5.6 L13.8 10.4 Q13.8 11.7 12.5 11.7 L3.5 11.7 Q2.2 11.7 2.2 10.4 Z" fill="url(#fg)"/></svg>
<div class="tt" style="left:768.0px;top:610.0px">手机平台</div>
<i class="ta r" style="left:737px;top:633px"></i>
<svg class="abs" style="left:748.5px;top:630.6px" width="16" height="14" viewBox="0 0 16 14"><path d="M1 3.4 Q1 1.3 3 1.3 L5.6 1.3 Q6.6 1.3 7.2 2.1 L7.9 3 L13 3 Q15 3 15 5 L15 10.6 Q15 12.9 12.8 12.9 L3.2 12.9 Q1 12.9 1 10.6 Z" fill="#e6c050" stroke="#8f7018" stroke-width="1.1"/><path d="M2.2 5.6 Q2.2 4.8 3 4.8 L13 4.8 Q13.8 4.8 13.8 5.6 L13.8 10.4 Q13.8 11.7 12.5 11.7 L3.5 11.7 Q2.2 11.7 2.2 10.4 Z" fill="url(#fg)"/></svg>
<div class="tt" style="left:768.0px;top:631.0px">无锡罗斯</div>
<i class="ta r" style="left:737px;top:653px"></i>
<svg class="abs" style="left:748.5px;top:650.6px" width="16" height="14" viewBox="0 0 16 14"><path d="M1 3.4 Q1 1.3 3 1.3 L5.6 1.3 Q6.6 1.3 7.2 2.1 L7.9 3 L13 3 Q15 3 15 5 L15 10.6 Q15 12.9 12.8 12.9 L3.2 12.9 Q1 12.9 1 10.6 Z" fill="#e6c050" stroke="#8f7018" stroke-width="1.1"/><path d="M2.2 5.6 Q2.2 4.8 3 4.8 L13 4.8 Q13.8 4.8 13.8 5.6 L13.8 10.4 Q13.8 11.7 12.5 11.7 L3.5 11.7 Q2.2 11.7 2.2 10.4 Z" fill="url(#fg)"/></svg>
<div class="tt" style="left:768.0px;top:651.0px">杭州迈冲产品平台</div>
<i class="ta r" style="left:737px;top:674px"></i>
<svg class="abs" style="left:748.5px;top:671.6px" width="16" height="14" viewBox="0 0 16 14"><path d="M1 3.4 Q1 1.3 3 1.3 L5.6 1.3 Q6.6 1.3 7.2 2.1 L7.9 3 L13 3 Q15 3 15 5 L15 10.6 Q15 12.9 12.8 12.9 L3.2 12.9 Q1 12.9 1 10.6 Z" fill="#e6c050" stroke="#8f7018" stroke-width="1.1"/><path d="M2.2 5.6 Q2.2 4.8 3 4.8 L13 4.8 Q13.8 4.8 13.8 5.6 L13.8 10.4 Q13.8 11.7 12.5 11.7 L3.5 11.7 Q2.2 11.7 2.2 10.4 Z" fill="url(#fg)"/></svg>
<div class="tt" style="left:768.0px;top:672.0px">江苏无线电</div>
<i class="ta r" style="left:737px;top:694px"></i>
<svg class="abs" style="left:748.5px;top:691.6px" width="16" height="14" viewBox="0 0 16 14"><path d="M1 3.4 Q1 1.3 3 1.3 L5.6 1.3 Q6.6 1.3 7.2 2.1 L7.9 3 L13 3 Q15 3 15 5 L15 10.6 Q15 12.9 12.8 12.9 L3.2 12.9 Q1 12.9 1 10.6 Z" fill="#e6c050" stroke="#8f7018" stroke-width="1.1"/><path d="M2.2 5.6 Q2.2 4.8 3 4.8 L13 4.8 Q13.8 4.8 13.8 5.6 L13.8 10.4 Q13.8 11.7 12.5 11.7 L3.5 11.7 Q2.2 11.7 2.2 10.4 Z" fill="url(#fg)"/></svg>
<div class="tt" style="left:768.0px;top:692.0px">湖南机油泵</div>
<i class="ta r" style="left:737px;top:715px"></i>
<svg class="abs" style="left:748.5px;top:712.6px" width="16" height="14" viewBox="0 0 16 14"><path d="M1 3.4 Q1 1.3 3 1.3 L5.6 1.3 Q6.6 1.3 7.2 2.1 L7.9 3 L13 3 Q15 3 15 5 L15 10.6 Q15 12.9 12.8 12.9 L3.2 12.9 Q1 12.9 1 10.6 Z" fill="#e6c050" stroke="#8f7018" stroke-width="1.1"/><path d="M2.2 5.6 Q2.2 4.8 3 4.8 L13 4.8 Q13.8 4.8 13.8 5.6 L13.8 10.4 Q13.8 11.7 12.5 11.7 L3.5 11.7 Q2.2 11.7 2.2 10.4 Z" fill="url(#fg)"/></svg>
<div class="tt" style="left:768.0px;top:713.0px">睿动力</div>
<i class="ta r" style="left:737px;top:735px"></i>
<svg class="abs" style="left:748.5px;top:732.6px" width="16" height="14" viewBox="0 0 16 14"><path d="M1 3.4 Q1 1.3 3 1.3 L5.6 1.3 Q6.6 1.3 7.2 2.1 L7.9 3 L13 3 Q15 3 15 5 L15 10.6 Q15 12.9 12.8 12.9 L3.2 12.9 Q1 12.9 1 10.6 Z" fill="#e6c050" stroke="#8f7018" stroke-width="1.1"/><path d="M2.2 5.6 Q2.2 4.8 3 4.8 L13 4.8 Q13.8 4.8 13.8 5.6 L13.8 10.4 Q13.8 11.7 12.5 11.7 L3.5 11.7 Q2.2 11.7 2.2 10.4 Z" fill="url(#fg)"/></svg>
<div class="tt" style="left:768.0px;top:733.0px">神宇通讯</div>
<i class="ta r" style="left:737px;top:756px"></i>
<svg class="abs" style="left:748.5px;top:753.6px" width="16" height="14" viewBox="0 0 16 14"><path d="M1 3.4 Q1 1.3 3 1.3 L5.6 1.3 Q6.6 1.3 7.2 2.1 L7.9 3 L13 3 Q15 3 15 5 L15 10.6 Q15 12.9 12.8 12.9 L3.2 12.9 Q1 12.9 1 10.6 Z" fill="#e6c050" stroke="#8f7018" stroke-width="1.1"/><path d="M2.2 5.6 Q2.2 4.8 3 4.8 L13 4.8 Q13.8 4.8 13.8 5.6 L13.8 10.4 Q13.8 11.7 12.5 11.7 L3.5 11.7 Q2.2 11.7 2.2 10.4 Z" fill="url(#fg)"/></svg>
<div class="tt" style="left:768.0px;top:754.0px">福建浔兴股份产品平台</div>
<i class="ta r" style="left:737px;top:776px"></i>
<svg class="abs" style="left:748.5px;top:773.6px" width="16" height="14" viewBox="0 0 16 14"><path d="M1 3.4 Q1 1.3 3 1.3 L5.6 1.3 Q6.6 1.3 7.2 2.1 L7.9 3 L13 3 Q15 3 15 5 L15 10.6 Q15 12.9 12.8 12.9 L3.2 12.9 Q1 12.9 1 10.6 Z" fill="#e6c050" stroke="#8f7018" stroke-width="1.1"/><path d="M2.2 5.6 Q2.2 4.8 3 4.8 L13 4.8 Q13.8 4.8 13.8 5.6 L13.8 10.4 Q13.8 11.7 12.5 11.7 L3.5 11.7 Q2.2 11.7 2.2 10.4 Z" fill="url(#fg)"/></svg>
<div class="tt" style="left:768.0px;top:774.0px">良信电器</div>
<i class="ta r" style="left:737px;top:797px"></i>
<svg class="abs" style="left:748.5px;top:794.6px" width="16" height="14" viewBox="0 0 16 14"><path d="M1 3.4 Q1 1.3 3 1.3 L5.6 1.3 Q6.6 1.3 7.2 2.1 L7.9 3 L13 3 Q15 3 15 5 L15 10.6 Q15 12.9 12.8 12.9 L3.2 12.9 Q1 12.9 1 10.6 Z" fill="#e6c050" stroke="#8f7018" stroke-width="1.1"/><path d="M2.2 5.6 Q2.2 4.8 3 4.8 L13 4.8 Q13.8 4.8 13.8 5.6 L13.8 10.4 Q13.8 11.7 12.5 11.7 L3.5 11.7 Q2.2 11.7 2.2 10.4 Z" fill="url(#fg)"/></svg>
<div class="tt" style="left:768.0px;top:795.0px">西安诺瓦</div>
<svg class="abs" style="left:748.5px;top:814.6px" width="16" height="14" viewBox="0 0 16 14"><path d="M1 3.4 Q1 1.3 3 1.3 L5.6 1.3 Q6.6 1.3 7.2 2.1 L7.9 3 L13 3 Q15 3 15 5 L15 10.6 Q15 12.9 12.8 12.9 L3.2 12.9 Q1 12.9 1 10.6 Z" fill="#e6c050" stroke="#8f7018" stroke-width="1.1"/><path d="M2.2 5.6 Q2.2 4.8 3 4.8 L13 4.8 Q13.8 4.8 13.8 5.6 L13.8 10.4 Q13.8 11.7 12.5 11.7 L3.5 11.7 Q2.2 11.7 2.2 10.4 Z" fill="url(#fg)"/></svg>
<div class="tt" style="left:768.0px;top:815.0px">未分类</div>
<div class="rbg"></div>
<div class="tb1"></div>
<svg class="abs" style="left:927px;top:189px" width="14" height="16" viewBox="0 0 14 16"><path d="M1.5 .5 H8.5 L12.5 4.5 V15.5 H1.5 Z" fill="#fdfdfd" stroke="#a0a0a0" stroke-width=".9"/><path d="M8.5 .5 V4.5 H12.5" fill="#e8e8e8" stroke="#a0a0a0" stroke-width=".8"/><rect x="3.5" y="10.8" width="7" height="2.4" fill="#e02828"/></svg>
<div class="tx" style="left:943.5px;top:188.7px">移去</div>
<svg class="abs" style="left:977px;top:188.7px" width="16" height="18" viewBox="0 0 16 18"><path d="M1.5 .5 H6.5 L9.5 3.5 V11.5 H1.5 Z" fill="#fdfdfd" stroke="#a0a0a0" stroke-width=".9"/><path d="M6 10 H10 V7 L15 11.8 L10 16.6 V13.6 H6 Z" fill="#58b828" stroke="#2a7a10" stroke-width=".8"/></svg>
<div class="tx" style="left:996.5px;top:188.7px">移动到</div>
<svg class="abs" style="left:1041px;top:189px" width="16" height="16" viewBox="0 0 16 16"><rect x=".7" y=".7" width="14.6" height="14.6" rx="1" fill="#d6e6f4" stroke="#3a78a8" stroke-width="1.2"/><rect x="2.8" y="2.8" width="10.4" height="3.6" fill="#fff" stroke="#5a88b0" stroke-width=".7"/><rect x="2.8" y="8" width="6" height="2" fill="#5a7a98"/><rect x="6.5" y="10.8" width="7" height="3.2" fill="#8a8a8a"/></svg>
<div class="tx" style="left:1060.5px;top:188.7px">定型区</div>
<div class="abs" style="left:1106px;top:187px;width:0;height:20px;border-left:1px dotted #555"></div>
<svg class="abs" style="left:1116px;top:190px" width="15" height="14" viewBox="0 0 15 14"><path d="M1 6.2 Q2 1.5 7.5 2 L10 2 L10 0 L14 3.4 L10 6.6 V4.6 L7.5 4.6 Q4.4 4.4 3.6 6.6 Z" fill="#3aa83a"/><path d="M14 7.8 Q13 12.5 7.5 12 L5 12 L5 14 L1 10.6 L5 7.4 V9.4 L7.5 9.4 Q10.6 9.6 11.4 7.4 Z" fill="#3aa83a"/></svg>
<div class="tx" style="left:1135px;top:188.7px">刷新</div>
<div class="frow"></div>
<div class="cb" style="left:934.5px;top:216.5px"></div><svg class="abs" style="left:936px;top:217.5px" width="11" height="11" viewBox="0 0 11 11"><path d="M2 5.5 L4.5 8.5 L9 1.5" fill="none" stroke="#9a9a9a" stroke-width="1.3"/></svg>
<div class="tx gy" style="left:952.5px;top:214px">归档区</div>
<div class="cb" style="left:993.5px;top:216.5px"></div>
<div class="tx gy" style="left:1012px;top:214px">工作区</div>
<div class="finput"></div>
<div class="g1white"></div>
<div class="ghead" style="left:930.3px;top:237.8px;width:789.7px;height:22px"></div>
<div class="gline" style="left:930.3px;top:236.8px;width:789.7px;height:1px"></div>
<div class="gh" style="left:930.3px;top:237.8px;width:38.7px">序号</div>
<div class="gh" style="left:969.0px;top:237.8px;width:117.0px">代号</div>
<div class="gsep" style="left:968.0px;top:237.8px;height:22px"></div>
<div class="gh" style="left:1086.0px;top:237.8px;width:156.3px">名称</div>
<div class="gsep" style="left:1085.0px;top:237.8px;height:22px"></div>
<div class="gh" style="left:1242.3px;top:237.8px;width:156.6px">英文名称</div>
<div class="gsep" style="left:1241.3px;top:237.8px;height:22px"></div>
<div class="gh" style="left:1398.9px;top:237.8px;width:195.4px">描述</div>
<div class="gsep" style="left:1397.9px;top:237.8px;height:22px"></div>
<div class="gh" style="left:1594.3px;top:237.8px;width:77.7px">负责人</div>
<div class="gsep" style="left:1593.3px;top:237.8px;height:22px"></div>
<div class="gh" style="left:1672.0px;top:237.8px;width:48.0px"></div>
<div class="gsep" style="left:1671.0px;top:237.8px;height:22px"></div>
<div class="gsel" style="left:930.3px;top:259.8px;width:789.7px;height:19.3px"></div>
<div class="gsep w" style="left:968.0px;top:259.8px;height:19.3px"></div>
<div class="gsep w" style="left:1085.0px;top:259.8px;height:19.3px"></div>
<div class="gsep w" style="left:1241.3px;top:259.8px;height:19.3px"></div>
<div class="gsep w" style="left:1397.9px;top:259.8px;height:19.3px"></div>
<div class="gsep w" style="left:1593.3px;top:259.8px;height:19.3px"></div>
<div class="gsep w" style="left:1671.0px;top:259.8px;height:19.3px"></div>
<div class="gc ctr" style="left:930.3px;top:260.3px;width:38.7px">1</div>
<div class="gc" style="left:971px;top:260.3px">1.10.5.42.001</div>
<div class="gc" style="left:1088px;top:260.3px">VE系列裸机箱P0.9375_宏...</div>
<div class="gc" style="left:1244px;top:260.3px">VE系列裸机箱P0.9375_宏...</div>
<div class="gc" style="left:1400.5px;top:260.3px">VE系列裸机箱P0.9375-_宏基069_...</div>
<div class="hsb"></div><div class="hsbb"></div><div class="hsbl"></div><i class="ta l" style="left:936px;top:338.5px"></i>
<div class="tabs1"></div><div class="tabon" style="left:1006.5px;top:358.3px;width:105.5px;height:24px"></div>
<div class="tx" style="left:947.5px;top:362.3px">基本属性</div>
<svg class="abs" style="left:1015.0px;top:362.0px" width="15" height="16" viewBox="0 0 15 16"><path d="M1.5 .5 H9.5 L13.5 4.5 V15.5 H1.5 Z" fill="#fdfdfd" stroke="#9a9a9a" stroke-width=".9"/><path d="M9.5 .5 V4.5 H13.5" fill="#e4e4e4" stroke="#9a9a9a" stroke-width=".8"/><path d="M4 5.5h5M4 7.8h7" stroke="#b0b0b0" stroke-width=".9"/><path d="M7.5 8.2 L8.9 11 L12 11.4 L9.8 13.4 L10.4 16 L7.5 14.6 L4.6 16 L5.2 13.4 L3 11.4 L6.1 11 Z" fill="#f6b93c" stroke="#d08a10" stroke-width=".5"/></svg>
<div class="tx" style="left:1033.5px;top:362.3px">平台配置清单</div>
<div class="tx" style="left:1123.5px;top:362.3px">[平台配置清单视图]</div>
<svg class="abs" style="left:1244.5px;top:362.0px" width="15" height="16" viewBox="0 0 15 16"><rect x=".6" y="1" width="13.8" height="13.6" fill="#fafafa" stroke="#6a6ab0" stroke-width="1"/><rect x=".6" y="1" width="13.8" height="3.2" fill="#3b3bb8"/><path d="M3 7h6M3 9.5h5M3 12h4" stroke="#b8b8c8" stroke-width="1"/><circle cx="10.6" cy="10.8" r="3" fill="#c0307a"/><circle cx="9.8" cy="10" r="1" fill="#f0a0c8"/></svg>
<div class="tx" style="left:1263px;top:362.3px">配置方法库</div>
<svg class="abs" style="left:1342.3px;top:362.0px" width="15" height="16" viewBox="0 0 15 16"><rect x=".6" y="1" width="13.8" height="13.6" fill="#fafafa" stroke="#6a6ab0" stroke-width="1"/><rect x=".6" y="1" width="13.8" height="3.2" fill="#3b3bb8"/><rect x="3" y="6" width="4" height="4" fill="#e03030"/><rect x="7.4" y="6" width="4" height="4" fill="#30a030"/><rect x="3" y="10.4" width="4" height="3.6" fill="#f0c020"/><rect x="7.4" y="10.4" width="4" height="3.6" fill="#3060e0"/></svg>
<div class="tx" style="left:1361.7px;top:362.3px">颜色配置清单</div>
<div class="tx" style="left:1451px;top:362.3px">&lt;平台工艺路线&gt;</div>
<div class="tx" style="left:1555px;top:362.3px">[产品]</div>
<svg class="abs" style="left:1606.0px;top:362.0px" width="15" height="16" viewBox="0 0 15 16"><path d="M1.5 .5 H9.5 L13.5 4.5 V15.5 H1.5 Z" fill="#fdfdfd" stroke="#a8a8a8" stroke-width=".9"/><path d="M9.5 .5 V4.5 H13.5" fill="#e8e8e8" stroke="#a8a8a8" stroke-width=".8"/><rect x="4.2" y="6.5" width="7" height="5.5" rx=".8" fill="#4a90e0" stroke="#2a60b0" stroke-width=".6"/><rect x="5.4" y="7.6" width="4.6" height="2.6" fill="#cfe4fa"/></svg>
<div class="tx" style="left:1624.5px;top:362.3px">技术文件</div>
<div class="tx" style="left:1692px;top:362.3px;width:28px;overflow:hidden">[平台产</div>
<div class="tb2"></div>
<svg class="abs" style="left:936.0px;top:388.0px" width="14" height="15" viewBox="0 0 15 16"><path d="M1.5 .5 H9 L13.5 5 V15.5 H1.5 Z" fill="#fdfdfd" stroke="#a8a8a8" stroke-width=".9"/><path d="M9 .5 V5 H13.5" fill="#ececec" stroke="#a8a8a8" stroke-width=".8"/></svg>
<div class="tx" style="left:953.3px;top:387.7px">新建</div>
<div class="tx" style="left:984.6px;top:387.7px">新建向导</div>
<div class="gline" style="left:930.3px;top:409.6px;width:789.7px;height:1px"></div>
<div class="ghead" style="left:930.3px;top:410.5px;width:789.7px;height:22px"></div>
<div class="gh" style="left:930.4px;top:410.5px;width:38.6px">行号</div>
<div class="gh" style="left:969.0px;top:410.5px;width:97.7px">模块</div>
<div class="gsep" style="left:968.0px;top:410.5px;height:22px"></div>
<div class="gh" style="left:1066.7px;top:410.5px;width:97.0px">代号</div>
<div class="gsep" style="left:1065.7px;top:410.5px;height:22px"></div>
<div class="gh" style="left:1163.8px;top:410.5px;width:118.8px">名称</div>
<div class="gsep" style="left:1162.8px;top:410.5px;height:22px"></div>
<div class="gh" style="left:1282.5px;top:410.5px;width:57.5px">数量</div>
<div class="gsep" style="left:1281.5px;top:410.5px;height:22px"></div>
<div class="gh" style="left:1340.0px;top:410.5px;width:194.6px">选择条件</div>
<div class="gsep" style="left:1339.0px;top:410.5px;height:22px"></div>
<div class="gh" style="left:1534.6px;top:410.5px;width:97.9px">配置位置号</div>
<div class="gsep" style="left:1533.6px;top:410.5px;height:22px"></div>
<div class="gh" style="left:1638.5px;top:410.5px;width:87.5px">机电软类别</div>
<div class="gsep" style="left:1631.5px;top:410.5px;height:22px"></div>
<div class="g2white"></div>
<div class="gzeb" style="left:930.3px;top:432.50px;width:789.7px;height:19.55px"></div>
<div class="gzeb" style="left:930.3px;top:471.60px;width:789.7px;height:19.55px"></div>
<div class="gzeb" style="left:930.3px;top:510.70px;width:789.7px;height:19.55px"></div>
<div class="gzeb" style="left:930.3px;top:549.80px;width:789.7px;height:19.55px"></div>
<div class="gzeb" style="left:930.3px;top:588.90px;width:789.7px;height:19.55px"></div>
<div class="gzeb" style="left:930.3px;top:628.00px;width:789.7px;height:19.55px"></div>
<div class="gzeb" style="left:930.3px;top:667.10px;width:789.7px;height:19.55px"></div>
<div class="gzeb" style="left:930.3px;top:706.20px;width:789.7px;height:19.55px"></div>
<div class="gzeb" style="left:930.3px;top:745.30px;width:789.7px;height:19.55px"></div>
<div class="gzeb" style="left:930.3px;top:784.40px;width:789.7px;height:19.55px"></div>
<div class="gsep w" style="left:968.0px;top:432.5px;height:371.4px"></div>
<div class="gsep w" style="left:1065.7px;top:432.5px;height:371.4px"></div>
<div class="gsep w" style="left:1162.8px;top:432.5px;height:371.4px"></div>
<div class="gsep w" style="left:1281.5px;top:432.5px;height:371.4px"></div>
<div class="gsep w" style="left:1339.0px;top:432.5px;height:371.4px"></div>
<div class="gsep w" style="left:1533.6px;top:432.5px;height:371.4px"></div>
<div class="gsep w" style="left:1631.5px;top:432.5px;height:371.4px"></div>
<div class="gc" style="left:932.5px;top:433.30px">250</div>
<div class="gc" style="left:971.0px;top:433.30px">10</div>
<div class="gc" style="left:1069.0px;top:433.30px">3.00.4716.72.89</div>
<div class="gc" style="left:1165.8px;top:433.30px">MBI5153GP</div>
<div class="gc ctr" style="left:1282.5px;top:433.30px;width:57.5px">90</div>
<div class="gc" style="left:1341.7px;top:433.30px">A = 4 AND C = 6</div>
<div class="gc" style="left:1537.5px;top:433.30px">S0002</div>
<div class="gc" style="left:1635.0px;top:433.30px">元器件</div>
<div class="gc" style="left:932.5px;top:452.85px">260</div>
<div class="gc" style="left:971.0px;top:452.85px">10</div>
<div class="gc" style="left:1069.0px;top:452.85px">3.00.4716.72.102</div>
<div class="gc" style="left:1165.8px;top:452.85px">MBI5124GP</div>
<div class="gc ctr" style="left:1282.5px;top:452.85px;width:57.5px">90</div>
<div class="gc" style="left:1341.7px;top:452.85px">A = 4 AND C = 7</div>
<div class="gc" style="left:1537.5px;top:452.85px">S0002</div>
<div class="gc" style="left:1635.0px;top:452.85px">元器件</div>
<div class="gc" style="left:932.5px;top:472.40px">265</div>
<div class="gc" style="left:971.0px;top:472.40px">10</div>
<div class="gc" style="left:1069.0px;top:472.40px">3.00.4716.68.57</div>
<div class="gc" style="left:1165.8px;top:472.40px">ICND2038S</div>
<div class="gc ctr" style="left:1282.5px;top:472.40px;width:57.5px">90</div>
<div class="gc" style="left:1341.7px;top:472.40px">A = 4 AND C = 8</div>
<div class="gc" style="left:1537.5px;top:472.40px">S0002</div>
<div class="gc" style="left:1635.0px;top:472.40px">元器件</div>
<div class="gc" style="left:932.5px;top:491.95px">270</div>
<div class="gc" style="left:971.0px;top:491.95px">10</div>
<div class="gc" style="left:1069.0px;top:491.95px">3.00.4716.68.51</div>
<div class="gc" style="left:1165.8px;top:491.95px">ICN2053BP</div>
<div class="gc ctr" style="left:1282.5px;top:491.95px;width:57.5px">90</div>
<div class="gc" style="left:1341.7px;top:491.95px">A = 4 AND C = 9</div>
<div class="gc" style="left:1537.5px;top:491.95px">S0002</div>
<div class="gc" style="left:1635.0px;top:491.95px">元器件</div>
<div class="gc" style="left:932.5px;top:511.50px">282</div>
<div class="gc" style="left:971.0px;top:511.50px">10</div>
<div class="gc" style="left:1069.0px;top:511.50px">3.10.4713.35.981</div>
<div class="gc" style="left:1165.8px;top:511.50px">P0.9375印制线路板...</div>
<div class="gc ctr" style="left:1282.5px;top:511.50px;width:57.5px">1</div>
<div class="gc" style="left:1341.7px;top:511.50px">A = 1 AND B = 1 AND C = 1</div>
<div class="gc" style="left:1537.5px;top:511.50px">S0003</div>
<div class="gc" style="left:1635.0px;top:511.50px">零部件</div>
<div class="gc" style="left:932.5px;top:531.05px">283</div>
<div class="gc" style="left:971.0px;top:531.05px">10</div>
<div class="gc" style="left:1069.0px;top:531.05px">3.10.4713.35.1...</div>
<div class="gc" style="left:1165.8px;top:531.05px">P1.25印制线路板 P...</div>
<div class="gc ctr" style="left:1282.5px;top:531.05px;width:57.5px">1</div>
<div class="gc" style="left:1341.7px;top:531.05px;letter-spacing:-.13px">A = 2 AND (B = 2 OR B = 3 OR B = ...</div>
<div class="gc" style="left:1537.5px;top:531.05px">S0003</div>
<div class="gc" style="left:1635.0px;top:531.05px">零部件</div>
<div class="gc" style="left:932.5px;top:550.60px">284</div>
<div class="gc" style="left:971.0px;top:550.60px">10</div>
<div class="gc" style="left:1069.0px;top:550.60px">3.10.4713.35.846</div>
<div class="gc" style="left:1165.8px;top:550.60px">P1.5625印制线路板...</div>
<div class="gc ctr" style="left:1282.5px;top:550.60px;width:57.5px">1</div>
<div class="gc" style="left:1341.7px;top:550.60px;letter-spacing:-.13px">A = 3 AND (B = 3 OR B = 4 OR B = ...</div>
<div class="gc" style="left:1537.5px;top:550.60px">S0003</div>
<div class="gc" style="left:1635.0px;top:550.60px">零部件</div>
<div class="gc" style="left:932.5px;top:570.15px">285</div>
<div class="gc" style="left:971.0px;top:570.15px">10</div>
<div class="gc" style="left:1069.0px;top:570.15px">3.10.4713.35.1...</div>
<div class="gc" style="left:1165.8px;top:570.15px">P1.875印制线路板 ...</div>
<div class="gc ctr" style="left:1282.5px;top:570.15px;width:57.5px">1</div>
<div class="gc" style="left:1341.7px;top:570.15px;letter-spacing:-.13px">A = 4 AND (B = 3 OR B = 4 OR B = ...</div>
<div class="gc" style="left:1537.5px;top:570.15px">S0003</div>
<div class="gc" style="left:1635.0px;top:570.15px">零部件</div>
<div class="gc" style="left:932.5px;top:589.70px">290</div>
<div class="gc" style="left:971.0px;top:589.70px">20</div>
<div class="gc" style="left:1069.0px;top:589.70px">1.10.3.01.014</div>
<div class="gc" style="left:1165.8px;top:589.70px">VE机箱右模块P0.93...</div>
<div class="gc ctr" style="left:1282.5px;top:589.70px;width:57.5px">1</div>
<div class="gc" style="left:1341.7px;top:589.70px">A = 1</div>
<div class="gc" style="left:1635.0px;top:589.70px">机械件</div>
<div class="gc" style="left:932.5px;top:609.25px">300</div>
<div class="gc" style="left:971.0px;top:609.25px">20</div>
<div class="gc" style="left:1069.0px;top:609.25px">1.10.3.02.171</div>
<div class="gc" style="left:1165.8px;top:609.25px">VE机箱右模块P1.25...</div>
<div class="gc ctr" style="left:1282.5px;top:609.25px;width:57.5px">1</div>
<div class="gc" style="left:1341.7px;top:609.25px">A = 2</div>
<div class="gc" style="left:1635.0px;top:609.25px">机械件</div>
<div class="gc" style="left:932.5px;top:628.80px">310</div>
<div class="gc" style="left:971.0px;top:628.80px">20</div>
<div class="gc" style="left:1069.0px;top:628.80px">1.10.3.02.255</div>
<div class="gc" style="left:1165.8px;top:628.80px">VE机箱右模块P1.56...</div>
<div class="gc ctr" style="left:1282.5px;top:628.80px;width:57.5px">1</div>
<div class="gc" style="left:1341.7px;top:628.80px">A = 3</div>
<div class="gc" style="left:1635.0px;top:628.80px">机械件</div>
<div class="gc" style="left:932.5px;top:648.35px">320</div>
<div class="gc" style="left:971.0px;top:648.35px">20</div>
<div class="gc" style="left:1069.0px;top:648.35px">1.10.3.02.257</div>
<div class="gc" style="left:1165.8px;top:648.35px">VE机箱右模块P1.87...</div>
<div class="gc ctr" style="left:1282.5px;top:648.35px;width:57.5px">1</div>
<div class="gc" style="left:1341.7px;top:648.35px">A = 4</div>
<div class="gc" style="left:1635.0px;top:648.35px">机械件</div>
<div class="gc" style="left:932.5px;top:667.90px">325</div>
<div class="gc" style="left:971.0px;top:667.90px">20</div>
<div class="gc" style="left:1069.0px;top:667.90px">4.2.6.14.006</div>
<div class="gc" style="left:1165.8px;top:667.90px">宏齐0606</div>
<div class="gc ctr" style="left:1282.5px;top:667.90px;width:57.5px">28800</div>
<div class="gc" style="left:1341.7px;top:667.90px">A = 1 AND B = 1</div>
<div class="gc" style="left:1537.5px;top:667.90px">S0004</div>
<div class="gc" style="left:1635.0px;top:667.90px">元器件</div>
<div class="gc" style="left:932.5px;top:687.45px">326</div>
<div class="gc" style="left:971.0px;top:687.45px">20</div>
<div class="gc" style="left:1069.0px;top:687.45px">4.2.6.14.007</div>
<div class="gc" style="left:1165.8px;top:687.45px">宏齐0808</div>
<div class="gc ctr" style="left:1282.5px;top:687.45px;width:57.5px">32400</div>
<div class="gc" style="left:1341.7px;top:687.45px">A = 2 AND B = 2</div>
<div class="gc" style="left:1537.5px;top:687.45px">S0004</div>
<div class="gc" style="left:1635.0px;top:687.45px">元器件</div>
<div class="gc" style="left:932.5px;top:707.00px">330</div>
<div class="gc" style="left:971.0px;top:707.00px">20</div>
<div class="gc" style="left:1069.0px;top:707.00px">4.2.6.25.001</div>
<div class="gc" style="left:1165.8px;top:707.00px">聚飞1010_(JH.EA1...</div>
<div class="gc ctr" style="left:1282.5px;top:707.00px;width:57.5px">32400</div>
<div class="gc" style="left:1341.7px;top:707.00px">A = 2 AND B = 3</div>
<div class="gc" style="left:1537.5px;top:707.00px">S0004</div>
<div class="gc" style="left:1635.0px;top:707.00px">元器件</div>
<div class="gc" style="left:932.5px;top:726.55px">330</div>
<div class="gc" style="left:971.0px;top:726.55px">20</div>
<div class="gc" style="left:1069.0px;top:726.55px">4.2.6.12.011</div>
<div class="gc" style="left:1165.8px;top:726.55px">晶台1010_(JT-EIF0...</div>
<div class="gc ctr" style="left:1282.5px;top:726.55px;width:57.5px">32400</div>
<div class="gc" style="left:1341.7px;top:726.55px">A = 2 AND B = 4</div>
<div class="gc" style="left:1537.5px;top:726.55px">S0004</div>
<div class="gc" style="left:1635.0px;top:726.55px">元器件</div>
<div class="gc" style="left:932.5px;top:746.10px">340</div>
<div class="gc" style="left:971.0px;top:746.10px">20</div>
<div class="gc" style="left:1069.0px;top:746.10px">4.2.6.24.004</div>
<div class="gc" style="left:1165.8px;top:746.10px">新光台1010_(1010-...</div>
<div class="gc ctr" style="left:1282.5px;top:746.10px;width:57.5px">32400</div>
<div class="gc" style="left:1341.7px;top:746.10px">A = 2 AND B = 5</div>
<div class="gc" style="left:1537.5px;top:746.10px">S0004</div>
<div class="gc" style="left:1635.0px;top:746.10px">元器件</div>
<div class="gc" style="left:932.5px;top:765.65px">350</div>
<div class="gc" style="left:971.0px;top:765.65px">20</div>
<div class="gc" style="left:1069.0px;top:765.65px">4.2.6.07.016</div>
<div class="gc" style="left:1165.8px;top:765.65px">国星1010_(FC-B10...</div>
<div class="gc ctr" style="left:1282.5px;top:765.65px;width:57.5px">32400</div>
<div class="gc" style="left:1341.7px;top:765.65px">A = 2 AND B = 6</div>
<div class="gc" style="left:1537.5px;top:765.65px">S0004</div>
<div class="gc" style="left:1635.0px;top:765.65px">元器件</div>
<div class="gc" style="left:932.5px;top:785.20px">360</div>
<div class="gc" style="left:971.0px;top:785.20px">20</div>
<div class="gc" style="left:1069.0px;top:785.20px">4.2.6.25.001</div>
<div class="gc" style="left:1165.8px;top:785.20px">聚飞1010_(JH.EA1...</div>
<div class="gc ctr" style="left:1282.5px;top:785.20px;width:57.5px">20736</div>
<div class="gc" style="left:1341.7px;top:785.20px">A = 3 AND B = 3</div>
<div class="gc" style="left:1537.5px;top:785.20px">S0004</div>
<div class="gc" style="left:1635.0px;top:785.20px">元器件</div>
<div class="ov">
<div class="otabs"></div><div class="otabon" style="left:376.7px;top:2.2px;width:115px;height:31px"></div>
<div class="ox" style="left:20.2px;top:9.7px;">基本属性</div>
<svg class="abs" style="left:103.7px;top:9.5px" width="18" height="19" viewBox="0 0 15 16"><path d="M1.5 .5 H9.5 L13.5 4.5 V15.5 H1.5 Z" fill="#fdfdfd" stroke="#9a9a9a" stroke-width=".9"/><path d="M9.5 .5 V4.5 H13.5" fill="#e4e4e4" stroke="#9a9a9a" stroke-width=".8"/><path d="M4 5.5h5M4 7.8h7" stroke="#b0b0b0" stroke-width=".9"/><path d="M7.5 8.2 L8.9 11 L12 11.4 L9.8 13.4 L10.4 16 L7.5 14.6 L4.6 16 L5.2 13.4 L3 11.4 L6.1 11 Z" fill="#f6b93c" stroke="#d08a10" stroke-width=".5"/></svg>
<div class="ox" style="left:126.2px;top:9.7px;">平台配置清单</div>
<div class="ox" style="left:237.7px;top:9.7px;">[平台配置清单视图]</div>
<svg class="abs" style="left:385.7px;top:9.5px" width="18" height="19" viewBox="0 0 15 16"><rect x=".6" y="1" width="13.8" height="13.6" fill="#fafafa" stroke="#6a6ab0" stroke-width="1"/><rect x=".6" y="1" width="13.8" height="3.2" fill="#3b3bb8"/><path d="M3 7h6M3 9.5h5M3 12h4" stroke="#b8b8c8" stroke-width="1"/><circle cx="10.6" cy="10.8" r="3" fill="#c0307a"/><circle cx="9.8" cy="10" r="1" fill="#f0a0c8"/></svg>
<div class="ox" style="left:409.0px;top:9.7px;">配置方法库</div>
<svg class="abs" style="left:505.3px;top:9.5px" width="18" height="19" viewBox="0 0 15 16"><rect x=".6" y="1" width="13.8" height="13.6" fill="#fafafa" stroke="#6a6ab0" stroke-width="1"/><rect x=".6" y="1" width="13.8" height="3.2" fill="#3b3bb8"/><rect x="3" y="6" width="4" height="4" fill="#e03030"/><rect x="7.4" y="6" width="4" height="4" fill="#30a030"/><rect x="3" y="10.4" width="4" height="3.6" fill="#f0c020"/><rect x="7.4" y="10.4" width="4" height="3.6" fill="#3060e0"/></svg>
<div class="ox" style="left:529.4px;top:9.7px;">颜色配置清单</div>
<div class="ox" style="left:639.7px;top:9.7px;">&lt;平台工艺路线&gt;</div>
<div class="ox" style="left:767.7px;top:9.7px;">[产品]</div>
<svg class="abs" style="left:830.7px;top:9.5px" width="18" height="19" viewBox="0 0 15 16"><path d="M1.5 .5 H9.5 L13.5 4.5 V15.5 H1.5 Z" fill="#fdfdfd" stroke="#a8a8a8" stroke-width=".9"/><path d="M9.5 .5 V4.5 H13.5" fill="#e8e8e8" stroke="#a8a8a8" stroke-width=".8"/><rect x="4.2" y="6.5" width="7" height="5.5" rx=".8" fill="#4a90e0" stroke="#2a60b0" stroke-width=".6"/><rect x="5.4" y="7.6" width="4.6" height="2.6" fill="#cfe4fa"/></svg>
<div class="ox" style="left:853.7px;top:9.7px;">技术文件</div>
<div class="ox" style="left:935.5px;top:9.7px;">[平台产品基线]</div>
<div class="ox" style="left:1055.7px;top:9.7px;">[变更</div>
<div class="otb"></div>
<svg class="abs" style="left:6.7px;top:41.3px" width="18" height="19" viewBox="0 0 15 16"><path d="M1.5 .5 H9 L13.5 5 V15.5 H1.5 Z" fill="#fdfdfd" stroke="#a8a8a8" stroke-width=".9"/><path d="M9 .5 V5 H13.5" fill="#ececec" stroke="#a8a8a8" stroke-width=".8"/></svg>
<div class="ox" style="left:28.2px;top:41.3px;">新建</div>
<div class="ogl" style="top:67.2px"></div>
<div class="oghead" style="top:68.2px"></div>
<div class="ogh" style="left:0.0px;top:68.2px;width:59.4px">行号</div>
<div class="ogh" style="left:59.4px;top:68.2px;width:120.3px">大类</div>
<div class="ogsep" style="left:58.4px;top:68.2px;height:26.7px"></div>
<div class="ogh" style="left:179.7px;top:68.2px;width:72.0px">变量名</div>
<div class="ogsep" style="left:178.7px;top:68.2px;height:26.7px"></div>
<div class="ogh" style="left:251.7px;top:68.2px;width:120.4px">变量标签</div>
<div class="ogsep" style="left:250.7px;top:68.2px;height:26.7px"></div>
<div class="ogh" style="left:372.1px;top:68.2px;width:533.3px">配置方法</div>
<div class="ogsep" style="left:371.1px;top:68.2px;height:26.7px"></div>
<div class="ogh" style="left:986.2px;top:68.2px;width:80px">配置说明</div>
<div class="ogsep" style="left:904.4px;top:68.2px;height:26.7px"></div>
<div class="ogsel" style="top:119.0px;height:24.0px"></div>
<div class="ogzeb" style="top:167.0px;height:24.0px"></div>
<div class="ogzeb" style="top:215.0px;height:24.0px"></div>
<div class="ogsep w" style="left:58.4px;top:95.0px;height:168.0px"></div>
<div class="ogsep w" style="left:178.7px;top:95.0px;height:168.0px"></div>
<div class="ogsep w" style="left:250.7px;top:95.0px;height:168.0px"></div>
<div class="ogsep w" style="left:371.1px;top:95.0px;height:168.0px"></div>
<div class="ogsep w" style="left:904.4px;top:95.0px;height:168.0px"></div>
<div class="ofocus" style="left:372.7px;top:119.2px;width:532.7px;height:24.0px"></div>
<div class="oc ctr" style="left:0;top:97.0px;width:59.4px">1</div>
<div class="oc" style="left:61.7px;top:97.0px">主机类</div>
<div class="oc" style="left:182.1px;top:97.0px">A</div>
<div class="oc" style="left:253.7px;top:97.0px">点间距</div>
<div class="oc" style="left:375.5px;top:97.0px;letter-spacing:0.14px">1=P0.9375;2=P1.25;3=P1.5625;4=P1.875</div>
<div class="oc" style="left:907.4px;top:97.0px">选择点间距</div>
<div class="oc ctr" style="left:0;top:121.0px;width:59.4px">2</div>
<div class="oc" style="left:61.7px;top:121.0px">主机类</div>
<div class="oc" style="left:182.1px;top:121.0px">B</div>
<div class="oc" style="left:253.7px;top:121.0px">LED</div>
<div class="oc" style="left:375.5px;top:121.0px;letter-spacing:0.16px">1=宏基0606;2=宏齐0808;3=聚飞1010;4=晶台1010;5=新光台1010;6=国星1010</div>
<div class="oc" style="left:907.4px;top:121.0px">选择LED</div>
<div class="oc ctr" style="left:0;top:145.0px;width:59.4px">3</div>
<div class="oc" style="left:61.7px;top:145.0px">主机类</div>
<div class="oc" style="left:182.1px;top:145.0px">C</div>
<div class="oc" style="left:253.7px;top:145.0px">驱动IC</div>
<div class="oc" style="left:375.5px;top:145.0px;letter-spacing:0.03px">1=MBI5353GFN;2=MBI5153GFN;3=MBI5124GFN;4=ICND2038SGN;5=ICN205...</div>
<div class="oc" style="left:907.4px;top:145.0px">选择驱动IC</div>
<div class="oc ctr" style="left:0;top:169.0px;width:59.4px">4</div>
<div class="oc" style="left:61.7px;top:169.0px">主机类</div>
<div class="oc" style="left:182.1px;top:169.0px">F</div>
<div class="oc" style="left:253.7px;top:169.0px">认证</div>
<div class="oc" style="left:375.5px;top:169.0px">1=CCC认证;2=ETL认证;3=CE认证;4=无要求</div>
<div class="oc" style="left:907.4px;top:169.0px">选择认证要求</div>
<div class="oc ctr" style="left:0;top:193.0px;width:59.4px">5</div>
<div class="oc" style="left:61.7px;top:193.0px">主机类</div>
<div class="oc" style="left:182.1px;top:193.0px">G</div>
<div class="oc" style="left:253.7px;top:193.0px">LOGO</div>
<div class="oc" style="left:375.5px;top:193.0px;letter-spacing:-0.08px">1=三思LOGO;2=海康LOGO;3=大华LOGO;4=华为LOGO</div>
<div class="oc" style="left:907.4px;top:193.0px">选择LOGO</div>
<div class="oc ctr" style="left:0;top:217.0px;width:59.4px">6</div>
<div class="oc" style="left:61.7px;top:217.0px">配件类</div>
<div class="oc" style="left:182.1px;top:217.0px">D</div>
<div class="oc" style="left:253.7px;top:217.0px">电源</div>
<div class="oc" style="left:375.5px;top:217.0px">1=三思电源;2=新星电源</div>
<div class="oc" style="left:907.4px;top:217.0px">选择电源</div>
<div class="oc ctr" style="left:0;top:241.0px;width:59.4px">7</div>
<div class="oc" style="left:61.7px;top:241.0px">配件类</div>
<div class="oc" style="left:182.1px;top:241.0px">E</div>
<div class="oc" style="left:253.7px;top:241.0px">电源备份</div>
<div class="oc" style="left:375.5px;top:241.0px">1=单电源不备份;2=双电源备份</div>
<div class="oc" style="left:907.4px;top:241.0px">选择电源备份</div>
</div>
</body></html>
